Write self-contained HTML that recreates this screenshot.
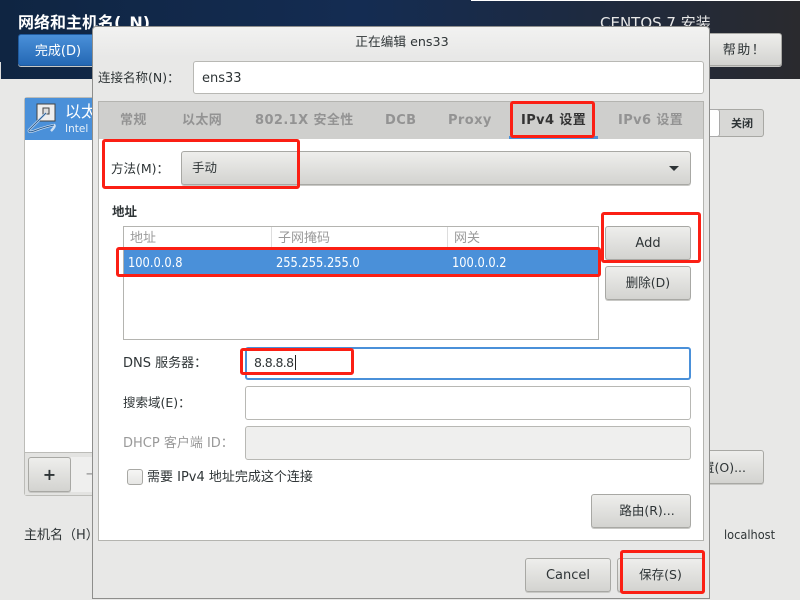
<!DOCTYPE html>
<html lang="zh"><head><meta charset="utf-8"><style>
html,body{margin:0;padding:0;width:800px;height:600px;overflow:hidden}
body{position:relative;background:#e8e8e7;font-family:"DejaVu Sans","WenQuanYi Zen Hei","Noto Sans CJK SC",sans-serif;font-size:12.5px;color:#2e3436}
div{position:absolute;box-sizing:border-box;white-space:nowrap}
.btn{background:linear-gradient(#eeeeec,#d3d3d0);border:1px solid #a8a8a4;border-radius:3px;text-align:center;color:#2e3436;box-shadow:0 1px 0 #c8c8c5}
.ent{background:#fff;border:1px solid #b8b8b4;border-radius:3px}
.red{border:3px solid #fb1f14;border-radius:3px;z-index:10}
.tab{top:112px;line-height:17px;font-weight:bold;font-size:13px;color:#939393;letter-spacing:.4px}
.hd{top:230px;line-height:17px;color:#9a9a9a;font-size:13px}
.cell{top:255px;line-height:17px;color:#fff;font-size:13px;transform:scaleX(.88);transform-origin:left center}
</style></head><body>
<div style="left:0;top:0;width:800px;height:79px;background:linear-gradient(90deg,#0f2542 0%,#142c52 45%,#1c2a42 70%,#2a2a2e 100%)"></div>
<div style="left:471px;top:0;width:329px;height:1px;background:#fff"></div>
<div style="left:0;top:62px;width:1px;height:17px;background:#ddd"></div>
<div style="left:18px;top:12px;color:#fff;font-size:16px;font-weight:bold;line-height:22px">网络和主机名(_N)</div>
<div style="left:600px;top:13px;color:#e8e8e8;font-size:15px;line-height:20px">CENTOS 7 安装</div>
<div class="btn" style="left:18px;top:34px;width:78px;height:32px;background:linear-gradient(#4a90d9,#2468b4);border-color:#1f5a9e;color:#fff;line-height:33px;font-size:13px;padding-left:2px">完成(D)</div>
<div class="btn" style="left:690px;top:33px;width:92px;height:33px;line-height:34px;padding-left:17px;font-size:13px;letter-spacing:1.5px">帮助！</div>

<div style="left:24px;top:97px;width:80px;height:399px;background:#fff;border:1px solid #bcbcb8;border-radius:3px"></div>
<div style="left:25px;top:98px;width:68px;height:42px;background:#4a90d9"></div>
<svg style="position:absolute;left:26px;top:100px" width="34" height="36" viewBox="0 0 34 36"><rect x="11" y="4" width="18" height="17" fill="#eee" stroke="#444"/><rect x="17" y="8" width="6" height="6" fill="#ddd" stroke="#444"/><path d="M20 13 L3 30 Q2 33 8 31 Q18 27 28 25 Q30 26 25 31" fill="none" stroke="#cfe0f2" stroke-width="2.4"/><path d="M20 13 L3 30 Q2 33 8 31 Q18 27 28 25" fill="none" stroke="#2d5f94" stroke-width="1"/></svg>
<div style="left:65px;top:102px;color:#fff;font-size:16px;line-height:20px">以太</div>
<div style="left:65px;top:122px;color:#e8f0f8;font-size:10.5px;line-height:14px">Intel C</div>
<div style="left:25px;top:452px;width:70px;height:43px;background:#e3e3e1;border-top:1px solid #bcbcb8"></div>
<div class="btn" style="left:28px;top:457px;width:43px;height:35px;line-height:33px;font-size:16px;font-weight:bold">+</div>
<div style="left:71px;top:457px;width:24px;height:35px;background:#efefee;color:#999;font-size:16px;line-height:33px;padding-left:14px">−</div>
<div style="left:24px;top:527px;font-size:13px;line-height:17px">主机名（H）</div>
<div style="left:724px;top:526px;font-size:12.5px;line-height:17px;transform:scaleX(.91);transform-origin:left center">localhost</div>
<div class="btn" style="left:700px;top:109px;width:64px;height:28px;background:#d8d8d6;line-height:27px;padding-left:20px;font-size:11px;font-weight:bold;box-shadow:none">关闭</div>
<div style="left:700px;top:109px;width:20px;height:28px;background:#fff;border:1px solid #aaa;border-radius:3px"></div>
<div class="btn" style="left:690px;top:450px;width:74px;height:34px;line-height:33px;text-align:right;padding-right:17px;font-size:12.5px">置(O)...</div>

<div style="left:92px;top:26px;width:618px;height:573px;background:#e8e8e7;border:1px solid #8e8e8c;border-radius:4px 4px 0 0"></div>
<div style="left:93px;top:27px;width:616px;height:30px;background:linear-gradient(#f2f2f1,#e8e8e7);border-radius:4px 4px 0 0"></div>
<div style="left:94px;top:33px;width:616px;text-align:center;font-size:12.7px;line-height:17px">正在编辑 ens33</div>
<div style="left:98px;top:69px;font-size:12.5px;line-height:17px">连接名称(N)：</div>
<div class="ent" style="left:193px;top:61px;width:511px;height:33px;line-height:33px;padding-left:8px;font-size:13px">ens33</div>

<div style="left:98px;top:101px;width:606px;height:38px;background:#cfcfcd;border:1px solid #b4b4b0;border-bottom:0"></div>
<div class="tab" style="left:120px">常规</div>
<div class="tab" style="left:182px">以太网</div>
<div class="tab" style="left:255px">802.1X 安全性</div>
<div class="tab" style="left:385px">DCB</div>
<div class="tab" style="left:448px">Proxy</div>
<div class="tab" style="left:521px;color:#333">IPv4 设置</div>
<div class="tab" style="left:618px">IPv6 设置</div>
<div style="left:509px;top:136px;width:89px;height:3px;background:#4a90d9"></div>

<div style="left:98px;top:139px;width:606px;height:402px;background:#fff;border:1px solid #b4b4b0;border-top:0"></div>
<div style="left:111px;top:160px;line-height:17px">方法(M)：</div>
<div class="btn" style="left:181px;top:151px;width:510px;height:34px;line-height:31px;text-align:left;padding-left:10px">手动</div>
<div style="left:669px;top:166px;width:0;height:0;border-left:5px solid transparent;border-right:5px solid transparent;border-top:5px solid #2e3436"></div>

<div style="left:112px;top:203px;font-weight:bold;line-height:17px">地址</div>
<div style="left:123px;top:226px;width:476px;height:114px;background:#fff;border:1px solid #b4b4b0"></div>
<div class="hd" style="left:130px">地址</div>
<div class="hd" style="left:278px">子网掩码</div>
<div class="hd" style="left:454px">网关</div>
<div style="left:271px;top:227px;width:1px;height:21px;background:#ddd"></div>
<div style="left:447px;top:227px;width:1px;height:21px;background:#ddd"></div>
<div style="left:124px;top:250px;width:474px;height:24px;background:#4a90d9"></div>
<div class="cell" style="left:128px">100.0.0.8</div>
<div class="cell" style="left:276px">255.255.255.0</div>
<div class="cell" style="left:452px">100.0.0.2</div>

<div class="btn" style="left:605px;top:226px;width:86px;height:34px;line-height:33px;font-size:13px">Add</div>
<div class="btn" style="left:605px;top:266px;width:86px;height:34px;line-height:32px;font-size:12.5px">删除(D)</div>

<div style="left:123px;top:355px;line-height:17px;font-size:13px">DNS 服务器：</div>
<div class="ent" style="left:245px;top:347px;width:446px;height:33px;border:2px solid #4a90d9;line-height:28px;padding-left:7px;letter-spacing:-.6px">8.8.8.8<span style="border-left:1px solid #222;margin-left:1px"></span></div>
<div style="left:123px;top:394px;line-height:17px">搜索域(E)：</div>
<div class="ent" style="left:245px;top:386px;width:446px;height:34px"></div>
<div style="left:123px;top:435px;line-height:17px;color:#999;font-size:13px">DHCP 客户端 ID：</div>
<div class="ent" style="left:245px;top:426px;width:446px;height:34px;background:#efefee"></div>
<div style="left:127px;top:469px;width:16px;height:16px;background:linear-gradient(#f6f6f5,#e6e6e4);border:1px solid #a8a8a4;border-radius:3px"></div>
<div style="left:147px;top:469px;line-height:17px;font-size:13px">需要 IPv4 地址完成这个连接</div>
<div class="btn" style="left:591px;top:494px;width:100px;height:34px;line-height:32px;padding-left:12px;font-size:12.5px">路由(R)...</div>
<div class="btn" style="left:525px;top:558px;width:86px;height:34px;line-height:33px;font-size:13px">Cancel</div>
<div class="btn" style="left:617px;top:558px;width:87px;height:34px;line-height:32px;font-size:12.5px">保存(S)</div>

<div class="red" style="left:102px;top:139px;width:198px;height:50px"></div>
<div class="red" style="left:510px;top:101px;width:85px;height:37px"></div>
<div class="red" style="left:601px;top:212px;width:100px;height:51px"></div>
<div class="red" style="left:116px;top:247px;width:485px;height:30px"></div>
<div class="red" style="left:240px;top:348px;width:114px;height:27px"></div>
<div class="red" style="left:620px;top:550px;width:85px;height:44px"></div>
</body></html>
